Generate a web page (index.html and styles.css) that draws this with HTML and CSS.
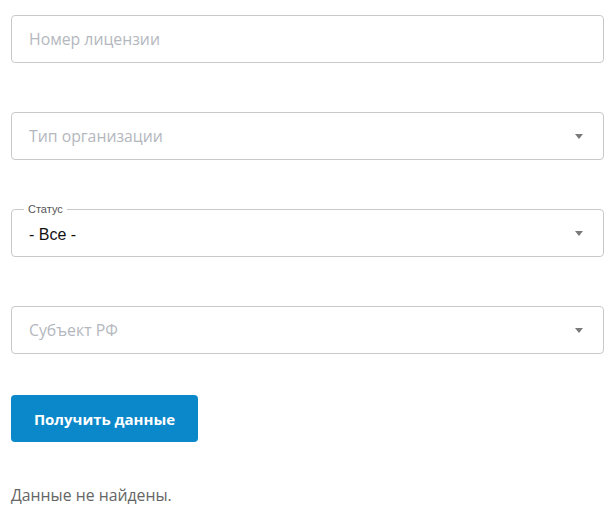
FILE: index.html
```html
<!doctype html>
<html>
<head>
  <meta charset="utf-8" />
  <title>Реестр лицензий</title>
  <link rel="stylesheet" href="styles.css">
</head>

<body>
  <form class="search">
    <div class="field">
      <input type="text" placeholder="Номер лицензии">
    </div>
    <div class="field select">
      <span class="placeholder">Тип организации</span>
      <span class="arrow"></span>
    </div>
    <div class="field select filled">
      <span class="legend">Статус</span>
      <span class="value">- Все -</span>
      <span class="arrow"></span>
    </div>
    <div class="field select">
      <span class="placeholder">Субъект РФ</span>
      <span class="arrow"></span>
    </div>
    <button type="button">Получить данные</button>
  </form>
  <p class="empty">Данные не найдены.</p>
</body>
</html>
```

FILE: styles.css
```css
body {
  margin: 0;
  padding: 15px 7px 0 11px;
  background: #fff;
  font-family: "Open Sans", "Noto Sans", sans-serif;
}
.search {
  display: flex;
  flex-direction: column;
  align-items: flex-start;
  gap: 49px;
}
.field {
  position: relative;
  box-sizing: border-box;
  width: 100%;
  height: 48px;
  border: 1px solid #c9c9c9;
  border-radius: 4px;
  display: flex;
  align-items: center;
  padding: 0 17px;
}
.field input {
  border: 0;
  outline: 0;
  padding: 0;
  width: 100%;
  font: 15.8px "Open Sans", "Noto Sans", sans-serif;
  color: #222;
}
.field input::placeholder,
.field .placeholder {
  color: #b4b7be;
  font-size: 15.8px;
}
.field .arrow {
  margin-left: auto;
  margin-right: 3px;
  width: 0;
  height: 0;
  border-left: 4px solid transparent;
  border-right: 4px solid transparent;
  border-top: 5px solid #7a7a7a;
}
.field.filled .value {
  font-family: "Liberation Sans", Arial, sans-serif;
  font-size: 16px;
  color: #111;
  padding-top: 3px;
}
.field .legend {
  position: absolute;
  top: -7px;
  left: 12px;
  padding: 0 4px;
  background: #fff;
  font-family: "Liberation Sans", Arial, sans-serif;
  font-size: 11px;
  line-height: 12px;
  color: #555;
}
button {
  margin-top: -8px;
  width: 187px;
  height: 47px;
  border: 0;
  border-radius: 4px;
  background: #0a88ca;
  color: #fff;
  font: 700 15px "Open Sans", "Noto Sans", sans-serif;
  cursor: pointer;
}
.empty {
  margin: 42px 0 0;
  font-size: 15.8px;
  color: #666;
}
```
